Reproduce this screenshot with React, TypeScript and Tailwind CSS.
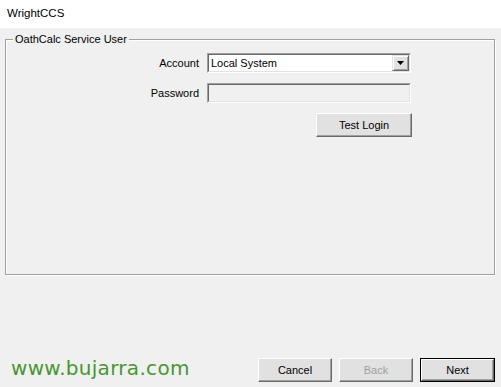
import React from 'react';

const ui = "font-['Liberation_Sans',Arial,sans-serif] text-[11px] text-black";

// classic raised win32 button
const Btn: React.FC<{ label: string; w: string; disabled?: boolean; def?: boolean }> = ({ label, w, disabled, def }) => (
  <div
    className={`${w} h-[24px] flex items-center justify-center bg-[#e1e1e1] ${
      def ? 'border border-black' : ''
    }`}
  >
    <div className="w-full h-full flex items-center justify-center border-t border-l border-t-white border-l-white border-r border-b border-r-[#696969] border-b-[#696969] shadow-[inset_-1px_-1px_0_#a0a0a0]">
      <span className={disabled ? 'text-[#a0a0a0]' : 'text-black'}>{label}</span>
    </div>
  </div>
);

const Sunken: React.FC<{ children?: React.ReactNode; bg: string }> = ({ children, bg }) => (
  <div className="w-[204px] h-[20px] border-t border-l border-t-[#a0a0a0] border-l-[#a0a0a0] border-r border-b border-r-white border-b-white">
    <div className={`w-full h-full border-t border-l border-t-[#696969] border-l-[#696969] border-r border-b border-r-[#e3e3e3] border-b-[#e3e3e3] ${bg} flex items-center`}>
      {children}
    </div>
  </div>
);

export default function App() {
  return (
    <div className={`${ui} w-[501px] h-[387px] bg-[#f0f0f0] flex flex-col`}>
      <div className="h-[28px] bg-white flex items-center pl-[7px] text-[11.5px]">WrightCCS</div>

      <div className="px-[5px] pt-[5px]">
        <fieldset className="border border-[#a0a0a0] shadow-[1px_1px_0_#fff,inset_1px_1px_0_#fff] h-[242px] w-[490px]">
          <legend className="ml-[7px] px-[2px] leading-[13px] bg-[#f0f0f0]">OathCalc Service User</legend>
          <div className="flex flex-col pt-[7px]">
            <div className="flex items-center">
              <div className="w-[193px] text-right">Account</div>
              <div className="ml-[8px]">
                <Sunken bg="bg-white">
                  <span className="pl-[2px] flex-1">Local System</span>
                  <div className="w-[17px] h-full bg-[#e1e1e1] flex items-center justify-center border-t border-l border-t-[#e3e3e3] border-l-[#e3e3e3] border-r border-b border-r-[#696969] border-b-[#696969] shadow-[inset_1px_1px_0_#fff,inset_-1px_-1px_0_#a0a0a0]">
                    <svg width="7" height="4" viewBox="0 0 7 4">
                      <path d="M0 0h7L3.5 4z" fill="#000" />
                    </svg>
                  </div>
                </Sunken>
              </div>
            </div>
            <div className="flex items-center mt-[10px]">
              <div className="w-[193px] text-right">Password</div>
              <div className="ml-[8px]">
                <Sunken bg="bg-[#f0f0f0]" />
              </div>
            </div>
            <div className="flex mt-[10px] pl-[310px]">
              <Btn label="Test Login" w="w-[96px]" />
            </div>
          </div>
        </fieldset>
      </div>

      <div className="mt-auto flex items-end justify-between pb-[5px] pr-[6px] pl-[11px]">
        <div className="font-['DejaVu_Sans',sans-serif] text-[20px] leading-[24px] tracking-[0.3px] text-[#489632] mb-[2px]">
          www.bujarra.com
        </div>
        <div className="flex gap-[7px]">
          <Btn label="Cancel" w="w-[74px]" />
          <Btn label="Back" w="w-[74px]" disabled />
          <Btn label="Next" w="w-[75px]" def />
        </div>
      </div>
    </div>
  );
}
